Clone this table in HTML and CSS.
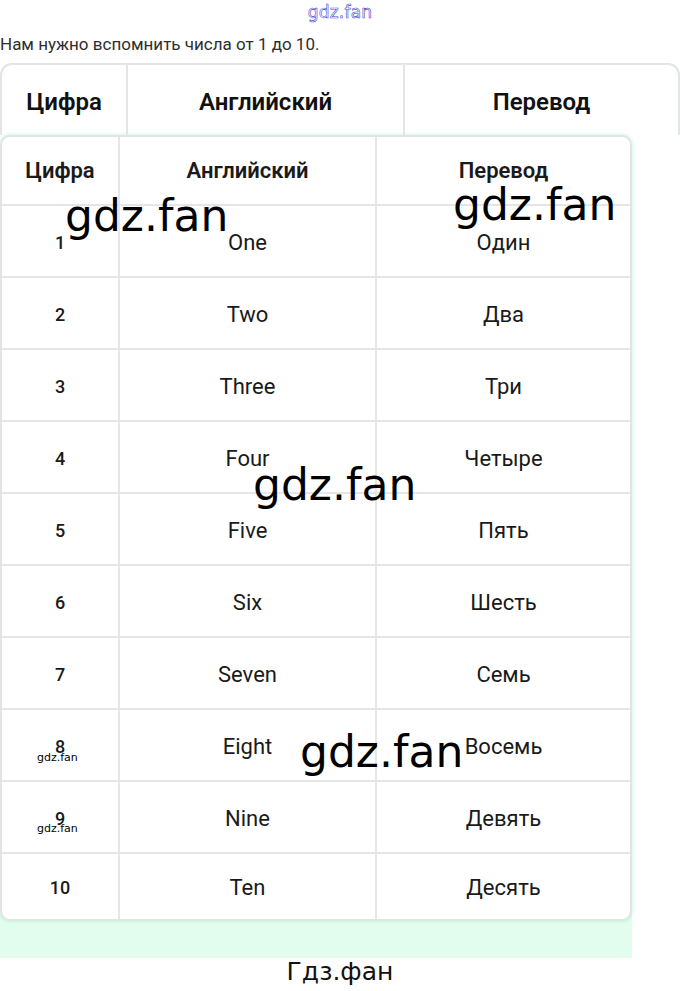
FILE: index.html
```html
<!DOCTYPE html>
<html lang="ru">
<head>
<meta charset="utf-8">
<title>Числа от 1 до 10</title>
<link rel="stylesheet" href="styles.css">
</head>
<body>
<div class="top-mark">gdz.fan</div>
<p class="intro">Нам нужно вспомнить числа от 1 до 10.</p>
<div class="sheet">
  <div class="head-table">
    <div class="hcell">Цифра</div>
    <div class="hcell">Английский</div>
    <div class="hcell">Перевод</div>
  </div>
  <div class="main-wrap">
    <div class="main-table">
      <div class="cell th">Цифра</div><div class="cell th">Английский</div><div class="cell th">Перевод</div>
      <div class="cell num">1</div><div class="cell">One</div><div class="cell">Один</div>
      <div class="cell num">2</div><div class="cell">Two</div><div class="cell">Два</div>
      <div class="cell num">3</div><div class="cell">Three</div><div class="cell">Три</div>
      <div class="cell num">4</div><div class="cell">Four</div><div class="cell">Четыре</div>
      <div class="cell num">5</div><div class="cell">Five</div><div class="cell">Пять</div>
      <div class="cell num">6</div><div class="cell">Six</div><div class="cell">Шесть</div>
      <div class="cell num">7</div><div class="cell">Seven</div><div class="cell">Семь</div>
      <div class="cell num">8</div><div class="cell">Eight</div><div class="cell">Восемь</div>
      <div class="cell num">9</div><div class="cell">Nine</div><div class="cell">Девять</div>
      <div class="cell num">10</div><div class="cell">Ten</div><div class="cell">Десять</div>
    </div>
  </div>
</div>
<div class="caption">Гдз.фан</div>

<div class="wm wm-1">gdz.fan</div>
<div class="wm wm-2">gdz.fan</div>
<div class="wm wm-3">gdz.fan</div>
<div class="wm wm-4">gdz.fan</div>
<div class="wm-small wm-5">gdz.fan</div>
<div class="wm-small wm-6">gdz.fan</div>
</body>
</html>
```

FILE: styles.css
```css
html, body {
  margin: 0;
  padding: 0;
  background: #ffffff;
}

body {
  position: relative;
  width: 680px;
  font-family: Roboto, "Liberation Sans", sans-serif;
  color: #161616;
}

.top-mark {
  height: 24px;
  line-height: 24px;
  text-align: center;
  font-family: "DejaVu Sans", sans-serif;
  font-size: 17px;
  color: transparent;
  -webkit-text-stroke: 0.6px #4a4ad2;
  letter-spacing: 0.2px;
}

.intro {
  margin: 0;
  height: 39px;
  box-sizing: border-box;
  padding-top: 10px;
  line-height: 20px;
  font-size: 17px;
  color: #2e2e2e;
}

.sheet {
  width: 680px;
}

.head-table {
  box-sizing: border-box;
  width: 680px;
  height: 72px;
  border: 2px solid #e4e6e5;
  border-bottom: none;
  border-radius: 12px 12px 0 0;
  display: grid;
  grid-template-columns: 124px 277px 1fr;
}

.hcell {
  display: flex;
  align-items: center;
  justify-content: center;
  padding-top: 4px;
  font-size: 24px;
  font-weight: 600;
  color: #111;
}

.hcell + .hcell {
  border-left: 2px solid #e4e6e5;
}

.main-wrap {
  width: 632px;
  padding-bottom: 37px;
  background: linear-gradient(to bottom, #ffffff 0, #ffffff calc(100% - 60px), #e2fdee calc(100% - 60px));
}

.main-table {
  box-sizing: border-box;
  width: 632px;
  border: 2px solid #e3e5e4;
  border-radius: 10px;
  overflow: hidden;
  background: #ffffff;
  box-shadow: 0 0 3px 1px rgba(175, 240, 210, 0.55);
  display: grid;
  grid-template-columns: 116px 257px 255px;
  grid-template-rows: 67px repeat(9, 72px) 67px;
}

.cell {
  box-sizing: border-box;
  display: flex;
  align-items: center;
  justify-content: center;
  padding-top: 2px;
  font-size: 22px;
  font-weight: 400;
  color: #1a1a1a;
  border-top: 2px solid #e6e6e6;
}

.cell.th {
  border-top: none;
  padding-top: 0;
  font-size: 22px;
  font-weight: 600;
}

.cell:not(:nth-child(3n+1)) {
  border-left: 2px solid #e6e6e6;
}

.cell.num {
  font-size: 18px;
  font-weight: 500;
}

.caption {
  height: 33px;
  line-height: 28px;
  text-align: center;
  font-family: "DejaVu Sans", sans-serif;
  font-size: 25px;
  color: #111;
}

.wm {
  position: absolute;
  font-family: "DejaVu Sans", sans-serif;
  font-size: 44px;
  line-height: 44px;
  color: #000;
  white-space: nowrap;
}

.wm-1 { left: 65px; top: 194px; }
.wm-2 { left: 453px; top: 183px; }
.wm-3 { left: 253px; top: 463px; }
.wm-4 { left: 300px; top: 730px; }

.wm-small {
  position: absolute;
  font-family: "DejaVu Sans", sans-serif;
  font-size: 11px;
  line-height: 11px;
  color: #000;
  white-space: nowrap;
}

.wm-5 { left: 37px; top: 752px; }
.wm-6 { left: 37px; top: 823px; }
```
